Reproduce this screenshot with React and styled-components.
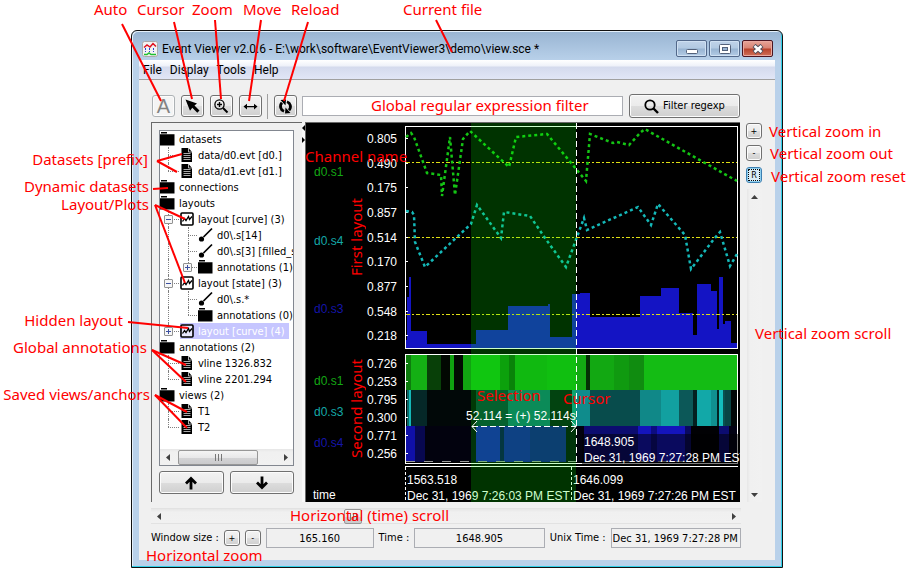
import React from "react";
import styled, { createGlobalStyle, css } from "styled-components";

const Global = createGlobalStyle`
  * { box-sizing: border-box; }
  body { margin: 0; background: #fff; }
  button, input { font: inherit; color: inherit; }
`;

const ui = `"DejaVu Sans Condensed", "Noto Sans", sans-serif`;
const frameFont = `Roboto, "Open Sans", sans-serif`;
const noteFont = `"Noto Sans", "Open Sans", sans-serif`;
const plotFont = `"Liberation Sans", Arial, sans-serif`;

/* ---------- window frame ---------- */

const Page = styled.main`
  position: relative;
  padding: 30px 126px 9px 131px;
  font: 11px/16px ${ui};
  color: #000;
`;

const Window = styled.section`
  border: 1px solid #111;
  border-radius: 6px 6px 0 0;
  box-shadow: inset -1px -1px 0 #30cfe8, inset 1px 1px 0 #e4f0fb;
  background: linear-gradient(#98b4d2 0, #b9d1ea 30px);
  padding: 0 7px 7px;
  overflow: hidden;
`;

const TitleBar = styled.header`
  display: flex;
  align-items: center;
  height: 29px;
  padding: 6px 2px 0 3px;
`;

const Title = styled.h1`
  flex: 1;
  min-width: 0;
  margin: 0 0 0 4px;
  font: 12px/16px ${frameFont};
  white-space: nowrap;
  overflow: hidden;
`;

const CaptionButtons = styled.div`
  display: flex;
  gap: 2px;
`;

const CaptionButton = styled.button`
  display: grid;
  place-items: center;
  width: 31px;
  height: 17px;
  padding: 0;
  border: 1px solid ${(p) => (p.$close ? "#4a1420" : "#52688a")};
  border-radius: 2px;
  box-shadow: inset 0 0 0 1px ${(p) => (p.$close ? "#e9a9a0" : "#cfe0f2")};
  background: ${(p) =>
    p.$close
      ? "linear-gradient(#e6a498 0, #d98474 7px, #b8432c 8px, #cf7058 100%)"
      : "linear-gradient(#c0d3e9 0, #b2c9e2 7px, #98b4d2 8px, #b3cbe5 100%)"};
`;

const MenuBar = styled.nav`
  display: flex;
  gap: 8px;
  height: 20px;
  padding: 1px 4px 0;
  border-bottom: 1px solid #a0a0a0;
  background: linear-gradient(#fff 0, #eef1f9 6px, #d4daed 7px, #e1e6f6 100%);
  font: 12px/18px ${frameFont};
`;

const MenuItem = styled.button`
  padding: 0;
  border: 0;
  background: none;
`;

const Client = styled.div`
  padding: 14px 13px 12px 13px;
  background: #f0f0f0;
`;

/* ---------- shared controls ---------- */

const Button = styled.button`
  display: flex;
  align-items: center;
  justify-content: center;
  gap: 4px;
  padding: 0;
  border: 1px solid #707070;
  border-radius: 3px;
  box-shadow: inset 0 0 0 1px #fcfcfc;
  background: linear-gradient(#f2f2f2 0, #ebebeb 50%, #dddddd 51%, #cfcfcf 100%);
`;

const ToolButton = styled(Button)`
  width: 23px;
  height: 22px;
  ${(p) =>
    p.$off &&
    css`
      border-color: #adb2b5;
      background: #f4f4f4;
      color: #838383;
      font: 20px/20px ${plotFont};
    `}
`;

const FilterButton = styled(Button)`
  width: 111px;
  height: 24px;
`;

const SmallButton = styled(Button)`
  flex: none;
  width: 16px;
  height: 16px;
  font-size: 9px;
  line-height: 12px;
  ${(p) =>
    p.$focus &&
    css`
      border-color: #3c7fb1;
      background: #d9ecf8;
      box-shadow: inset 0 0 0 1px #8fd0f0;
      outline: 1px dotted #000;
      outline-offset: -3px;
    `}
`;

const MoveButton = styled(Button)`
  flex: 1;
  height: 23px;
`;

const Field = styled.input`
  min-width: 0;
  height: 20px;
  padding: 0 1px;
  border: 1px solid #abadb3;
  background: ${(p) => (p.readOnly ? "#f0f0f0" : "#fff")};
  text-align: center;
`;

/* ---------- toolbar ---------- */

const Toolbar = styled.div`
  display: flex;
  align-items: center;
  gap: 6px;
  height: 24px;
  padding-right: 22px;
`;

const Divider = styled.span`
  width: 1px;
  height: 25px;
  margin-left: -1px;
  background: #a0a0a0;
`;

const FilterField = styled(Field)`
  flex: 1;
  margin-left: -1px;
`;

/* ---------- body ---------- */

const Workspace = styled.div`
  display: flex;
  height: 380px;
  margin: 4px 0 0 -1px;
`;

const Sidebar = styled.aside`
  display: flex;
  flex-direction: column;
  gap: 5px;
  width: 151px;
  padding: 7px 8px 8px 7px;
  border-top: 1px solid #696969;
  border-left: 1px solid #696969;
`;

const TreeBox = styled.div`
  display: flex;
  flex: 1;
  flex-direction: column;
  border: 1px solid #828790;
  background: #fff;
  overflow: hidden;
`;

const Tree = styled.ul`
  flex: 1;
  margin: 0;
  padding: 0;
  list-style: none;
  overflow: hidden;
`;

const Row = styled.li`
  display: flex;
  width: max-content;
  height: 16px;
  line-height: 18px;
  white-space: nowrap;
`;

const Guide = styled.span`
  position: relative;
  flex: none;
  width: 20px;
  & + & { width: 18px; }
  &::before {
    content: "";
    position: absolute;
    left: 8px;
    top: 0;
    height: ${(p) => (p.$kind === "last" ? 8 : 16)}px;
    border-left: 1px dotted #808080;
  }
  & + &::before, & + &::after { left: 7px; }
  &::after {
    content: "";
    position: absolute;
    left: 8px;
    right: 1px;
    top: 8px;
    border-top: ${(p) => (p.$kind === "pass" ? 0 : "1px dotted #808080")};
  }
`;

const Expander = styled.button`
  position: absolute;
  z-index: 1;
  left: ${(p) => (p.$nested ? 3 : 4)}px;
  top: 4px;
  display: block;
  width: 9px;
  height: 9px;
  padding: 0;
  border: 1px solid #919191;
  border-radius: 1px;
  background: #f6f6f6;
  svg { display: block; }
`;

const Cell = styled.span`
  display: flex;
  gap: 4px;
  padding-right: 4px;
  ${(p) =>
    p.$selected &&
    css`
      background: #c6c6ff;
      color: #fff;
    `}
`;

const Pair = styled.div`
  display: flex;
  gap: 6px;
`;

const Splitter = styled.div`
  display: flex;
  flex-direction: column;
  gap: 6px;
  width: 3px;
  padding-top: 3px;
  background: #f8f8f8;
`;

const PlotPanel = styled.figure`
  flex: 1;
  min-width: 0;
  margin: 0;
  border-top: 1px solid #696969;
  border-left: 1px solid #696969;
  background: #000;
  overflow: hidden;
  svg { display: block; width: 100%; height: 100%; }
`;

const ZoomColumn = styled.div`
  display: flex;
  flex-direction: column;
  align-items: center;
  gap: 6px;
  width: 16px;
  margin-left: 6px;
  padding-top: 1px;
`;

/* ---------- scroll bars ---------- */

const ScrollBar = styled.div`
  display: flex;
  flex-direction: ${(p) => (p.$vertical ? "column" : "row")};
  align-items: center;
  justify-content: space-between;
  background: linear-gradient(#e6e6e6, #f0f0f0 3px, #f1f1f1);
  ${(p) =>
    p.$vertical
      ? css`
          flex: 1;
          width: 15px;
          background: linear-gradient(90deg, #e6e6e6, #f0f0f0 3px, #f1f1f1);
        `
      : css`
          height: 16px;
        `}
`;

const ScrollArrow = styled.button`
  display: grid;
  place-items: center;
  width: 16px;
  height: 16px;
  padding: 0;
  border: 0;
  background: none;
`;

const Thumb = styled.button`
  display: grid;
  place-items: center;
  width: ${(p) => p.$size};
  height: 15px;
  margin-left: ${(p) => p.$start};
  margin-right: auto;
  padding: 0;
  border: 1px solid #979797;
  border-radius: 2px;
  background: linear-gradient(#f4f4f4 0, #e8e8e9 50%, #d4d4d6 51%, #cacacc 100%);
`;

const TimeScroll = styled(ScrollBar)`
  margin: 6px 21px 0 -1px;
  border: solid #e2e2e2;
  border-width: 1px 0;
`;

/* ---------- status row ---------- */

const Status = styled.footer`
  display: flex;
  align-items: center;
  gap: 5px;
  margin: 4px 21px 0 -1px;
`;

const Label = styled.label`
  flex: none;
  white-space: nowrap;
`;

const Readout = styled(Field)`
  flex: ${(p) => p.$grow} 1 0;
`;

/* ---------- callouts ---------- */

const Callouts = styled.div`
  position: absolute;
  inset: 0;
  pointer-events: none;
  overflow: hidden;
  color: #f00;
  font: 15px/18px ${noteFont};
  svg { position: absolute; left: 0; top: 0; }
`;

const Note = styled.span`
  position: absolute;
  left: ${(p) => p.$x}px;
  top: ${(p) => p.$y}px;
  white-space: nowrap;
  ${(p) => p.$end && css`transform: translateX(-100%);`}
  ${(p) => p.$up && css`writing-mode: vertical-rl; transform: rotate(180deg);`}
`;

/* ---------- icons ---------- */

const Arrow = ({ dir }) => {
  const d = { left: "M5 0v7L1 3.5z", right: "M2 0v7l4-3.5z", up: "M0 5h7L3.500 1z", down: "M0 2h7L3.500 6z" }[dir];
  return (
    <svg width="7" height="7" aria-hidden="true">
      <path d={d} fill="#404040" />
    </svg>
  );
};

const Grip = () => (
  <svg width="9" height="7" aria-hidden="true">
    <path d="M1.500 0v7M4.500 0v7M7.500 0v7" stroke="#777" />
  </svg>
);

const AppIcon = () => (
  <svg width="16" height="16" aria-hidden="true">
    <rect x=".5" y=".5" width="15" height="15" rx="2" fill="#f2f2f2" stroke="#aaa" />
    <path d="M2 6.500l3-2.500 3 2 3-3.500 3 3" fill="none" stroke="#e01020" strokeWidth="1.500" />
    <path d="M3.500 7v4M7.500 7v4M11.500 7v4" stroke="#3040d0" strokeDasharray="2 1" />
    <path d="M2 13.500h3l2-1.500 2 1.500h5" fill="none" stroke="#20c030" strokeWidth="1.500" />
  </svg>
);

const icons = {
  cursor: (
    <svg width="17" height="17" aria-hidden="true">
      <path d="M1.500 1.500l11.500 4-2.500 2 5 5-2.200 2.200-5-5-2.300 3z" fill="#000" />
    </svg>
  ),
  zoom: (
    <svg width="17" height="17" aria-hidden="true" fill="none" stroke="#000">
      <circle cx="6.500" cy="6.500" r="4.600" strokeWidth="1.300" />
      <path d="M6.500 4v5M4 6.500h5" strokeWidth="1.400" />
      <path d="M10 10l4.500 4.500" strokeWidth="2" />
    </svg>
  ),
  move: (
    <svg width="17" height="17" aria-hidden="true">
      <path d="M4 8h9v1.200H4z" />
      <path d="M1.500 8.600l3.500-2.800v5.600zM15.500 8.600l-3.500-2.800v5.600z" />
    </svg>
  ),
  reload: (
    <svg width="17" height="17" aria-hidden="true" fill="none" stroke="#000" strokeWidth="2.800">
      <path d="M7 13.300A5.200 5.200 0 0 1 5 4.800" />
      <path d="M10 3.700A5.200 5.200 0 0 1 12 12.200" />
      <path d="M3.500 2l5.500-.5-.5 6zM13.500 15l-5.500.5.5-6z" fill="#000" stroke="none" />
    </svg>
  ),
  search: (
    <svg width="15" height="15" aria-hidden="true" fill="none" stroke="#000">
      <circle cx="6" cy="6" r="4.700" strokeWidth="1.800" />
      <path d="M9.500 9.500l4.500 4.500" strokeWidth="2.400" />
    </svg>
  ),
  up: (
    <svg width="14" height="14" aria-hidden="true" fill="none" stroke="#000" strokeWidth="2.800">
      <path d="M7 13.500V2.500M2 7.500l5-5 5 5" />
    </svg>
  ),
  down: (
    <svg width="14" height="14" aria-hidden="true" fill="none" stroke="#000" strokeWidth="2.800">
      <path d="M7 .5v11M2 6.500l5 5 5-5" />
    </svg>
  ),
  folder: (
    <svg width="15" height="16" aria-hidden="true">
      <path d="M1 1h6v1.600H1zM0 3.200h14.500v11.300H0z" />
    </svg>
  ),
  file: (
    <svg width="14" height="16" aria-hidden="true">
      <path d="M1.500 1h7l3.500 4v10h-10.500z" />
      <path d="M8.500 1v4H12" fill="none" stroke="#ddd" strokeWidth=".8" />
      <path d="M3.500 6.500h7M3.500 8.500h7M3.500 10.500h7M3.500 12.500h7" stroke="#aaa" />
    </svg>
  ),
  plot: (
    <svg width="14" height="16" aria-hidden="true">
      <rect x="1" y="2" width="12" height="12" rx="1" fill="#fff" fillOpacity=".6" stroke="#000" strokeWidth="1.600" />
      <path d="M2.500 10.500l2-3 1.500 2 2.500-4 1 3 2.500-3" fill="none" stroke="#000" strokeWidth="1.300" />
    </svg>
  ),
  brush: (
    <svg width="15" height="16" aria-hidden="true">
      <path d="M5.500 10L14 1.500" stroke="#000" strokeWidth="1.700" />
      <circle cx="3.500" cy="12" r="2.600" />
    </svg>
  ),
};

/* ---------- data ---------- */

const tree = [
  ["folder", "datasets", []],
  ["file", "data/d0.evt [d0.]", ["tee"]],
  ["file", "data/d1.evt [d1.]", ["last"]],
  ["folder", "connections", []],
  ["folder", "layouts", []],
  ["plot", "layout [curve] (3)", ["tee"], "-"],
  ["brush", "d0\\.s[14]", ["pass", "tee"]],
  ["brush", "d0\\.s[3] [filled_step]", ["pass", "tee"]],
  ["folder", "annotations (1)", ["pass", "last"], "+"],
  ["plot", "layout [state] (3)", ["tee"], "-"],
  ["brush", "d0\\.s.*", ["pass", "tee"]],
  ["folder", "annotations (0)", ["pass", "last"]],
  ["plot", "layout [curve] (4)", ["last"], "+", true],
  ["folder", "annotations (2)", []],
  ["file", "vline 1326.832", ["tee"]],
  ["file", "vline 2201.294", ["last"]],
  ["folder", "views (2)", []],
  ["file", "T1", ["tee"]],
  ["file", "T2", ["last"]],
];

const green =
  "406,137 411,133 414,137 427,173 441,175 442,196 450,137 455,195 463,139 470,131 509,167 516,137 547,134 572,164 586,181 590,134 613,143 617,142 629,145 641,132 645,129 650,132 737,181";
const cyan =
  "406,211 412,212 414,215 415,242 425,267 457,237 471,224 477,205 501,238 504,212 530,216 545,238 566,267 577,237 584,218 587,230 638,207 651,225 658,204 685,235 691,269 714,239 720,232 730,266 737,254";

/* [right edge, top] of each step, starting from the left of the axis */
const steps = [
  [407, 340], [409, 297], [411, 277], [427, 331], [476, 344], [508, 330], [548, 306], [550, 304],
  [572, 337], [580, 294], [590, 293], [640, 317], [661, 296], [679, 288], [693, 313], [697, 335],
  [711, 284], [717, 291], [719, 329], [723, 277], [725, 324], [731, 321], [737, 343],
];

/* [right edge, colour] of each state */
const bands = [
  { y: 355, h: 35, cells: [
    [411, "#0e7c0e"], [427, "#14b014"], [441, "#084008"], [450, "#020802"], [454, "#10a010"], [463, "#020802"],
    [471, "#11a311"], [500, "#14b814"], [509, "#108a10"], [515, "#0c640c"], [547, "#14a814"], [576, "#14b014"], [586, "#13aa13"],
    [590, "#053005"], [614, "#12a812"], [629, "#109a10"], [644, "#108c10"], [737, "#14bc14"]] },
  { y: 390, h: 36, cells: [
    [407, "#000"], [409, "#0c6868"], [411, "#14b8b8"], [427, "#052828"], [476, "#010808"], [508, "#073a3a"],
    [550, "#0e6e6e"], [572, "#031414"], [590, "#0f8c8c"], [640, "#084c4c"], [661, "#108888"], [679, "#12a0a0"],
    [693, "#0c5858"], [697, "#042020"], [711, "#12a8a8"], [717, "#109090"], [719, "#042424"], [723, "#14bcbc"],
    [725, "#0a5050"], [731, "#084444"], [737, "#010808"]] },
  { y: 426, h: 36, cells: [
    [415, "#1010a8"], [425, "#080850"], [476, "#02020e"], [500, "#1414b8"], [504, "#060650"], [530, "#1212a4"],
    [566, "#10108c"], [584, "#02020e"], [638, "#0c0c70"], [651, "#1414bc"], [657, "#0c0c80"], [685, "#1414bc"],
    [691, "#0a0a60"], [719, "#010104"], [729, "#0c0c70"], [737, "#020214"]] },
];

const scale = [
  ["0.805", 143], ["0.490", 168], ["0.175", 192], ["0.857", 217], ["0.514", 242], ["0.170", 266],
  ["0.877", 291], ["0.548", 316], ["0.218", 340], ["0.726", 368], ["0.253", 386], ["0.795", 404],
  ["0.300", 422], ["0.771", 440], ["0.256", 458],
];

const channels = [
  ["d0.s1", 176, "#14a814"], ["d0.s4", 245, "#14a8a8"], ["d0.s3", 313, "#1414a8"],
  ["d0.s1", 385, "#14a814"], ["d0.s3", 416, "#14a8a8"], ["d0.s4", 447, "#1414a8"],
];

const lines = [
  [122, 24, 161, 101], [174, 22, 192, 99], [215, 20, 221, 99], [261, 20, 249, 101], [308, 22, 284, 101],
  [436, 20, 452, 52], [157, 161, 182, 154], [157, 161, 177, 172], [153, 189, 168, 188], [155, 205, 185, 219],
  [155, 205, 185, 283], [128, 322, 188, 328], [152, 350, 186, 365], [152, 350, 186, 382], [155, 395, 187, 412],
  [155, 395, 187, 428],
];

const notes = [
  ["Auto", 94, 0], ["Cursor", 137, 0], ["Zoom", 192, 0], ["Move", 243, 0], ["Reload", 291, 0],
  ["Current file", 403, 0], ["Global regular expression filter", 371, 96], ["Channel name", 305, 147],
  ["Selection", 477, 386], ["Cursor", 563, 389], ["Horizontal (time) scroll", 290, 506],
  ["Horizontal zoom", 146, 546], ["Vertical zoom in", 769, 122], ["Vertical zoom out", 770, 144],
  ["Vertical zoom reset", 771, 167], ["Vertical zoom scroll", 755, 324],
  ["Datasets [prefix]", 148, 150, "end"], ["Dynamic datasets", 149, 177, "end"], ["Layout/Plots", 149, 195, "end"],
  ["Hidden layout", 123, 311, "end"], ["Global annotations", 147, 338, "end"], ["Saved views/anchors", 150, 385, "end"],
  ["First layout", 347, 198, "up"], ["Second layout", 347, 359, "up"],
];

/* ---------- plots ---------- */

const withStart = (cells) => cells.map(([end, v], i) => [i ? cells[i - 1][0] : 406, end, v]);

const Plots = () => (
  <svg viewBox="306 123 434 379" preserveAspectRatio="xMinYMin meet" fontFamily={plotFont} fontSize="12" role="img" aria-label="Event plots">
    <g shapeRendering="crispEdges">
      {withStart(steps).map(([a, b, top]) => (
        <rect key={a} x={a} y={top} width={b - a} height={348 - top} fill="#1414c4" />
      ))}
      {bands.map((band) =>
        withStart(band.cells).map(([a, b, fill]) => (
          <rect key={band.y + "-" + a} x={a} y={band.y} width={b - a} height={band.h} fill={fill} />
        ))
      )}
      <g stroke="#dede14" strokeDasharray="4 2 2 2">
        <path d="M406 162.500h331M406 237.500h331M406 314.500h331" />
      </g>
      <path d="M406 461.500h331" stroke="#999" strokeDasharray="9 9" />
      <g fill="none" stroke="#fff">
        <rect x="405.500" y="126.500" width="332" height="222" />
        <rect x="405.500" y="354.500" width="332" height="109" />
        <path d="M405 466.500h333" />
        <path d="M405.500 467v35M571.500 467v35" strokeDasharray="3 2" />
        {scale.map(([v, y]) => (
          <path key={v} d={`M406 ${y - 4.5}h2`} />
        ))}
      </g>
    </g>
    <g fill="none" strokeWidth="2.500" strokeDasharray="3 3">
      <polyline points={green} stroke="#14c414" />
      <polyline points={cyan} stroke="#14b8b8" />
    </g>
    <g fill="#fff">
      {scale.map(([v, y]) => (
        <text key={v} x="367" y={y}>{v}</text>
      ))}
      <text x="313" y="499">time</text>
      <text x="407" y="484">1563.518</text>
      <text x="407" y="500">Dec 31, 1969 7:26:03 PM EST</text>
      <text x="573" y="484">1646.099</text>
      <text x="573" y="500">Dec 31, 1969 7:27:26 PM EST</text>
    </g>
    {channels.map(([name, y, fill]) => (
      <text key={y} x="314" y={y} fill={fill}>{name}</text>
    ))}
    <rect x="471" y="123" width="105" height="379" fill="#0f0" fillOpacity=".2" />
    <rect x="582" y="434" width="160" height="31" fillOpacity=".5" />
    <path d="M576.500 123v342" stroke="#fff" strokeDasharray="6 3" />
    <path d="M472 426.500h104" stroke="#fff" strokeDasharray="6 3" />
    <path d="M477 421l-5 5.500 5 5.500M571 421l5 5.500-5 5.500" fill="none" stroke="#fff" />
    <g fill="#fff">
      <text x="466" y="420">52.114 = (+) 52.114s</text>
      <text x="584" y="446">1648.905</text>
      <text x="584" y="462">Dec 31, 1969 7:27:28 PM EST</text>
    </g>
  </svg>
);

export default function App() {
  return (
    <Page>
      <Global />
      <Window>
        <TitleBar>
          <AppIcon />
          <Title>Event Viewer v2.0.6 - E:\work\software\EventViewer3\demo\view.sce *</Title>
          <CaptionButtons>
            <CaptionButton aria-label="Minimize">
              <svg width="12" height="10" aria-hidden="true">
                <rect x=".5" y="5.500" width="11" height="4" rx="1" fill="#fff" stroke="#53617a" />
              </svg>
            </CaptionButton>
            <CaptionButton aria-label="Maximize">
              <svg width="12" height="10" aria-hidden="true">
                <rect x=".5" y=".5" width="11" height="9" rx="1" fill="#fff" stroke="#53617a" />
                <rect x="3.500" y="3.500" width="5" height="3" fill="#98b4d2" stroke="#53617a" />
              </svg>
            </CaptionButton>
            <CaptionButton $close aria-label="Close">
              <svg width="12" height="10" aria-hidden="true">
                <path d="M2 1.500l8 7M10 1.500l-8 7" stroke="#53505c" strokeWidth="4.500" />
                <path d="M2.500 2l7 6M9.500 2l-7 6" stroke="#fff" strokeWidth="2.500" />
              </svg>
            </CaptionButton>
          </CaptionButtons>
        </TitleBar>
        <MenuBar>
          {["File", "Display", "Tools", "Help"].map((m) => (
            <MenuItem key={m}>{m}</MenuItem>
          ))}
        </MenuBar>
        <Client>
          <Toolbar>
            <ToolButton $off disabled aria-label="Auto">A</ToolButton>
            <ToolButton aria-label="Cursor">{icons.cursor}</ToolButton>
            <ToolButton aria-label="Zoom">{icons.zoom}</ToolButton>
            <ToolButton aria-label="Move">{icons.move}</ToolButton>
            <Divider />
            <ToolButton aria-label="Reload">{icons.reload}</ToolButton>
            <FilterField aria-label="Global regular expression filter" defaultValue="" />
            <FilterButton>{icons.search}Filter regexp</FilterButton>
          </Toolbar>
          <Workspace>
            <Sidebar>
              <TreeBox>
                <Tree>
                  {tree.map(([icon, text, guides, mark, selected], i) => (
                    <Row key={i}>
                      {guides.map((kind, g) => (
                        <Guide key={g} $kind={kind}>
                          {mark && g === guides.length - 1 && (
                            <Expander $nested={g > 0} aria-label={mark === "+" ? "Expand" : "Collapse"}>
                              <svg width="7" height="7" aria-hidden="true">
                                <path d={mark === "+" ? "M1 3.500h5M3.500 1v5" : "M1 3.500h5"} stroke="#3c50a0" />
                              </svg>
                            </Expander>
                          )}
                        </Guide>
                      ))}
                      <Cell $selected={selected}>
                        {icons[icon]}
                        {text}
                      </Cell>
                    </Row>
                  ))}
                </Tree>
                <ScrollBar>
                  <ScrollArrow aria-label="Scroll left"><Arrow dir="left" /></ScrollArrow>
                  <Thumb $size="80px" $start="2px" aria-label="Scroll tree"><Grip /></Thumb>
                  <ScrollArrow aria-label="Scroll right"><Arrow dir="right" /></ScrollArrow>
                </ScrollBar>
              </TreeBox>
              <Pair>
                <MoveButton aria-label="Move up">{icons.up}</MoveButton>
                <MoveButton aria-label="Move down">{icons.down}</MoveButton>
              </Pair>
            </Sidebar>
            <Splitter>
              <svg width="3" height="6" aria-hidden="true"><path d="M3 0v6L0 3z" /></svg>
              <svg width="3" height="6" aria-hidden="true"><path d="M0 0v6l3-3z" /></svg>
            </Splitter>
            <PlotPanel><Plots /></PlotPanel>
            <ZoomColumn>
              <SmallButton aria-label="Vertical zoom in">+</SmallButton>
              <SmallButton aria-label="Vertical zoom out">-</SmallButton>
              <SmallButton $focus aria-label="Vertical zoom reset">R</SmallButton>
              <ScrollBar $vertical>
                <ScrollArrow aria-label="Scroll up"><Arrow dir="up" /></ScrollArrow>
                <ScrollArrow aria-label="Scroll down"><Arrow dir="down" /></ScrollArrow>
              </ScrollBar>
            </ZoomColumn>
          </Workspace>
          <TimeScroll>
            <ScrollArrow aria-label="Earlier"><Arrow dir="left" /></ScrollArrow>
            <Thumb $size="18px" $start="30%" aria-label="Scroll time"><Grip /></Thumb>
            <ScrollArrow aria-label="Later"><Arrow dir="right" /></ScrollArrow>
          </TimeScroll>
          <Status>
            <Label htmlFor="size">Window size :</Label>
            <SmallButton aria-label="Horizontal zoom in">+</SmallButton>
            <SmallButton aria-label="Horizontal zoom out">-</SmallButton>
            <Readout $grow={110} id="size" readOnly value="165.160" />
            <Label htmlFor="time">Time :</Label>
            <Readout $grow={134} id="time" readOnly value="1648.905" />
            <Label htmlFor="unix">Unix Time :</Label>
            <Readout $grow={134} id="unix" readOnly value="Dec 31, 1969 7:27:28 PM EST" />
          </Status>
        </Client>
      </Window>
      <Callouts>
        <svg width="909" height="577" aria-hidden="true" stroke="#f00" strokeWidth="2">
          {lines.map(([x1, y1, x2, y2], i) => (
            <line key={i} x1={x1} y1={y1} x2={x2} y2={y2} />
          ))}
        </svg>
        {notes.map(([text, x, y, mode]) => (
          <Note key={text + y} $x={x} $y={y} $end={mode === "end"} $up={mode === "up"}>{text}</Note>
        ))}
      </Callouts>
    </Page>
  );
}
